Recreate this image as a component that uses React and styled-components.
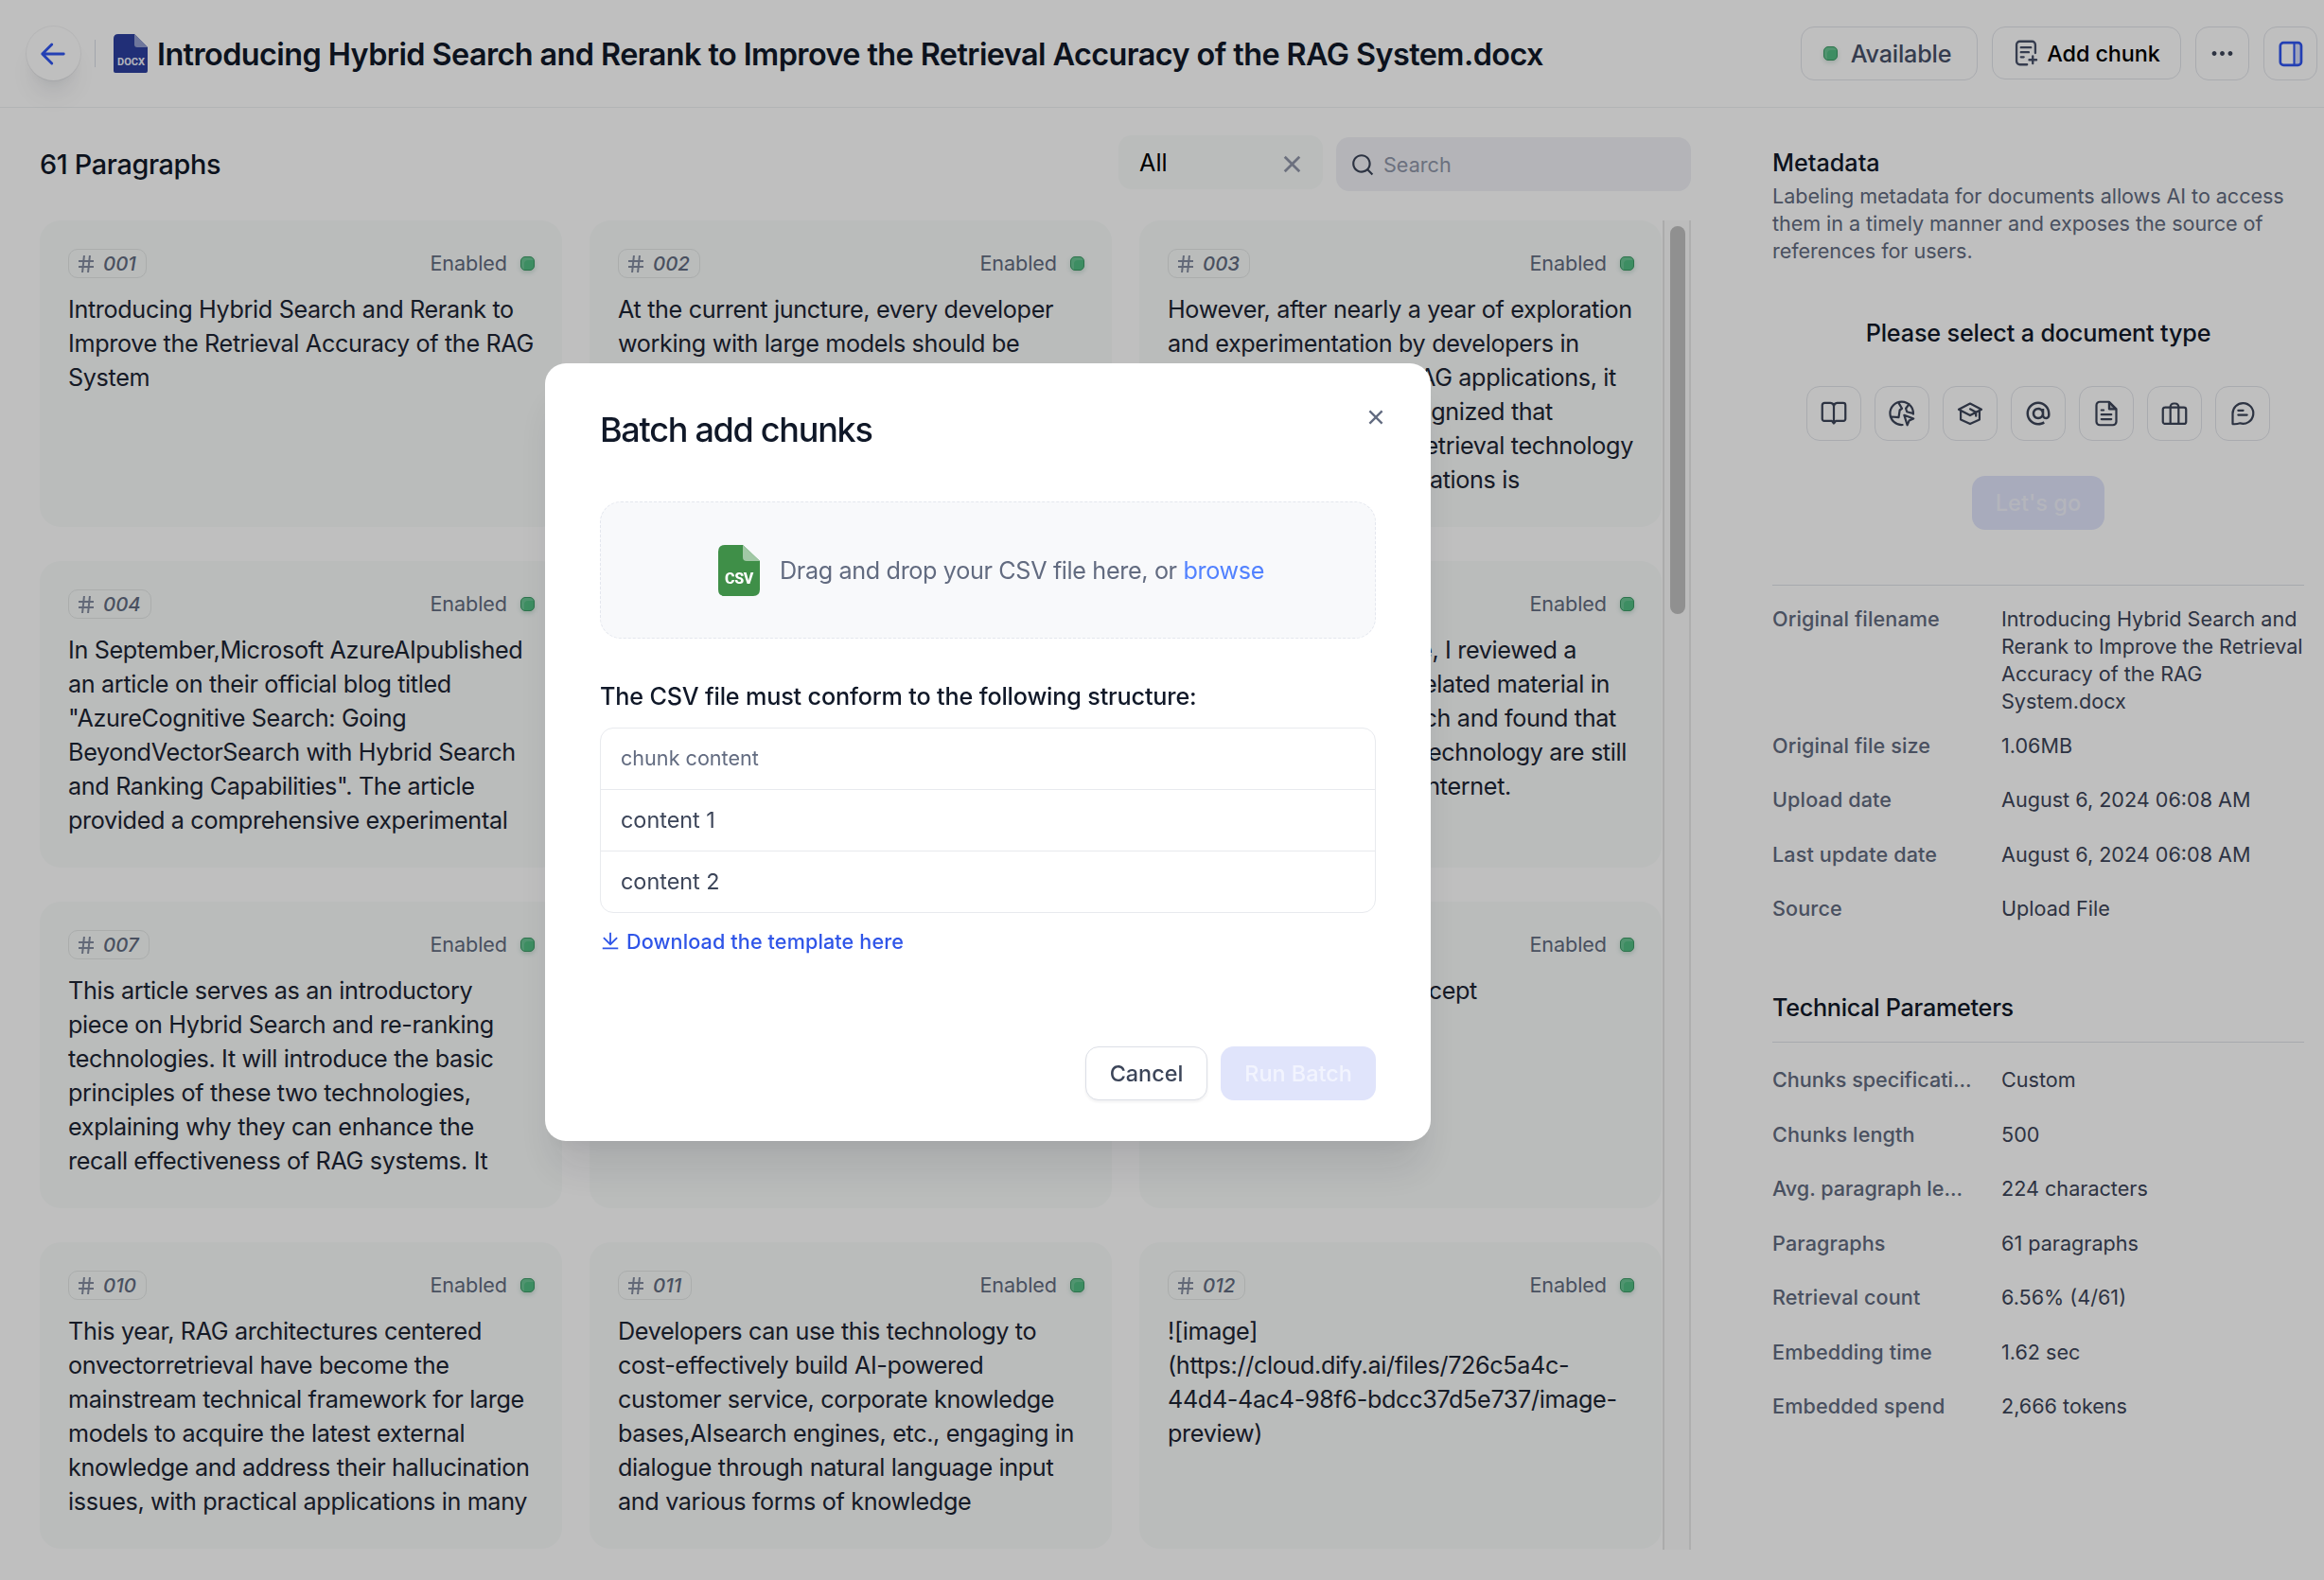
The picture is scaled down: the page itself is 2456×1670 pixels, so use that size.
import React from "react";
import styled, { createGlobalStyle } from "styled-components";
import { RiCloseLine, RiSearchLine, RiMoreFill, RiHashtag, RiAtLine, RiDownloadLine } from "react-icons/ri";

const Global = createGlobalStyle`
  *, *::before, *::after { box-sizing: border-box; }
  body { margin: 0; background: #fff; font-family: Inter, "Noto Sans", sans-serif; font-size: 25.2px; color: #101828; overflow: hidden; }
  button { font: inherit; margin: 0; background: none; border: none; padding: 0; color: inherit; }
  h1, h2, h3, p { margin: 0; }
  svg { display: block; flex-shrink: 0; }
`;

const Page = styled.div`
  width: 2456px;
  height: 1670px;
  display: flex;
  flex-direction: column;
  overflow: hidden;
`;

const Header = styled.header`
  height: 114px;
  flex-shrink: 0;
  display: flex;
  align-items: center;
  padding: 0 7px 0 28px;
  border-bottom: 1.5px solid #eef0f2;
`;

const BackButton = styled.button`
  width: 57px;
  height: 57px;
  padding-right: 1px;
  border-radius: 50%;
  display: flex;
  align-items: center;
  justify-content: center;
  color: #3156f0;
  background: #fff;
  box-shadow: 0 0 0 1px rgba(16, 24, 40, 0.05), 0 21px 27px -7px rgba(16, 24, 40, 0.09), 0 7px 11px -4px rgba(16, 24, 40, 0.04);
`;

const Divider = styled.div`
  width: 1px;
  height: 29px;
  margin: 0 19px 0 15px;
  background: #d9dce6;
`;

const Title = styled.h1`
  margin-left: 10px;
  padding-top: 2px;
  flex: 1;
  font-size: 32.4px;
  line-height: 48px;
  font-weight: 630;
  letter-spacing: -0.58px;
  white-space: nowrap;
`;

const HeaderActions = styled.div`
  display: flex;
  gap: 15px;
`;

const OutlineBox = styled.button`
  height: ${(p) => p.$h || 57}px;
  width: ${(p) => p.$w}px;
  padding-right: ${(p) => p.$pr || 0}px;
  display: flex;
  align-items: center;
  justify-content: center;
  gap: ${(p) => p.$gap || 0}px;
  border: 1px solid #e2e4ea;
  border-radius: 14px;
  font-size: ${(p) => p.$fs || 25.2}px;
  letter-spacing: ${(p) => p.$ls || 0}px;
  font-weight: 500;
  color: ${(p) => p.$color || "#3c4559"};
  white-space: nowrap;
  svg { color: ${(p) => p.$icon || "inherit"}; }
`;

const Dot = styled.span`
  width: 15px;
  height: 15px;
  border-radius: 5px;
  border: 1.5px solid #3d9a66;
  background: #52bd83;
  box-shadow: 0 2px 5px rgba(16, 100, 60, 0.2), inset 3px 3px 0 rgba(255, 255, 255, 0.15);
`;

const Body = styled.div`
  flex: 1;
  display: flex;
  min-height: 0;
`;

const Main = styled.main`
  width: 1787px;
  padding: 30px 0 0 42px;
  display: flex;
  flex-direction: column;
`;

const Toolbar = styled.div`
  display: flex;
  align-items: flex-start;
  height: 89px;
`;

const Count = styled.h2`
  flex: 1;
  font-size: 28.8px;
  font-weight: 520;
  line-height: 60px;
  letter-spacing: -0.35px;
`;

const Filter = styled.div`
  width: 216px;
  height: 57px;
  margin: -1px 14px 0 0;
  padding: 0 16px 0 22px;
  border-radius: 14px;
  background: #f8fbfa;
  display: flex;
  align-items: center;
  justify-content: space-between;
  color: #000;
  svg { color: #9096a9; margin-top: 3px; }
`;

const SearchBox = styled.div`
  width: 375px;
  height: 57px;
  margin-top: 1px;
  padding-left: 15px;
  border-radius: 14px;
  background: #f0f1f6;
  display: flex;
  align-items: center;
  gap: 9px;
  font-size: 21.6px;
  color: #8f96a9;
  svg { color: #3c4559; }
`;

const ListArea = styled.div`
  display: flex;
  height: 1405px;
`;

const CardGrid = styled.div`
  display: grid;
  width: 1714px;
  grid-template-columns: repeat(3, 552px);
  grid-auto-rows: 324px;
  column-gap: 29px;
  row-gap: 36px;
  align-content: start;
`;

const CardBox = styled.article`
  padding: 30px 29px 0 30px;
  border-radius: 22px;
  background: #f8fbfa;
`;

const CardTop = styled.div`
  height: 31px;
  display: flex;
  align-items: center;
  justify-content: space-between;
`;

const Tag = styled.div`
  height: 31px;
  display: flex;
  align-items: center;
  gap: 6px;
  padding: 0 10px 0 6px;
  border: 1px solid #e4e7e6;
  border-radius: 10px;
  font-size: 20.4px;
  font-weight: 540;
  font-style: italic;
  color: #626b80;
  svg { color: #858da1; }
`;

const Status = styled.div`
  display: flex;
  align-items: center;
  gap: 14px;
  font-size: 21.6px;
  line-height: 26px;
  padding-bottom: 1px;
  letter-spacing: -0.08px;
  color: #626b80;
`;

const CardText = styled.div`
  margin-top: 15px;
  line-height: 36px;
  letter-spacing: -0.35px;
  white-space: pre;
  color: #1d2433;
`;

const TailLine = styled.div`
  width: ${(p) => p.$end}px;
  text-align: right;
`;

const ScrollTrack = styled.div`
  width: 30px;
  margin-left: 1px;
  padding: 6px 0 0 6px;
  border-left: 2px solid #e5e5e5;
  border-right: 2px solid #e8e8e8;
  background: #fbfbfb;
`;

const ScrollThumb = styled.div`
  width: 16px;
  height: 410px;
  border-radius: 8px;
  background: #c0c0c0;
`;

const Side = styled.aside`
  flex: 1;
  padding: 42px 21px 0 86px;
`;

const SideTitle = styled.h3`
  font-size: 25.2px;
  line-height: 32px;
  font-weight: 500;
`;

const SideNote = styled.p`
  margin-top: 5px;
  font-size: 21.6px;
  line-height: 29px;
  letter-spacing: -0.06px;
  color: #626b80;
  white-space: pre;
`;

const Prompt = styled(SideTitle)`
  margin-top: 56px;
  text-align: center;
  letter-spacing: -0.16px;
`;

const TechTitle = styled(SideTitle)`
  margin-top: 74px;
  letter-spacing: -0.28px;
`;

const TypeRow = styled.div`
  display: flex;
  justify-content: center;
  gap: 14px;
  margin-top: 40px;
`;

const GoButton = styled.button`
  display: block;
  width: 140px;
  height: 57px;
  margin: 37px auto 0;
  border-radius: 14px;
  background: #e0e4fb;
  color: #f0f2fb;
  font-size: 23.6px;
  font-weight: 500;
`;

const InfoList = styled.dl`
  margin: ${(p) => p.$mt}px 0 0;
  padding-top: ${(p) => p.$top}px;
  border-top: 1px solid #dfe2e9;
  font-size: 21.6px;
  line-height: 29px;
`;

const InfoRow = styled.div`
  display: flex;
  margin-bottom: ${(p) => (p.$tall ? 17.5 : 28.5)}px;
`;

const Term = styled.dt`
  width: 242px;
  flex-shrink: 0;
  font-weight: 500;
  letter-spacing: ${(p) => (p.$cut ? -0.02 : 0.12)}px;
  color: #626b80;
  white-space: nowrap;
`;

const Value = styled.dd`
  margin: 0;
  color: #3c4559;
  white-space: pre;
`;

const Overlay = styled.div`
  position: fixed;
  inset: 0;
  display: flex;
  align-items: flex-start;
  padding: 384px 0 0 576px;
  background: rgba(0, 0, 0, 0.25);
`;

const Modal = styled.section`
  width: 936px;
  height: 822px;
  border-radius: 22px;
  background: #fff;
  padding: 40px 58px 0;
  display: flex;
  flex-direction: column;
  box-shadow: 0 36px 43px -7px rgba(16, 24, 40, 0.1), 0 14px 14px -7px rgba(16, 24, 40, 0.04);
`;

const ModalHead = styled.div`
  display: flex;
  justify-content: space-between;
  height: 106px;
  svg { margin: 3px -14px 0 0; color: #626b80; }
`;

const ModalTitle = styled.h2`
  font-size: 36px;
  line-height: 60px;
  font-weight: 550;
  letter-spacing: -1.27px;
`;

const DropZone = styled.div`
  height: 145px;
  flex-shrink: 0;
  display: flex;
  align-items: center;
  justify-content: center;
  gap: 21px;
  padding-left: 7px;
  border: 1.5px dashed #e4e7ee;
  border-radius: 22px;
  background: #f8f9fb;
  letter-spacing: -0.36px;
  color: #626b80;
`;

const Browse = styled.span`
  color: #5282ff;
`;

const StructureTitle = styled.h3`
  margin-top: 43px;
  font-size: 25.2px;
  line-height: 36px;
  font-weight: 520;
  letter-spacing: -0.17px;
`;

const Table = styled.div`
  margin-top: 15px;
  height: 196px;
  flex-shrink: 0;
  border: 1.5px solid #e8eaee;
  border-radius: 14px;
`;

const TableRow = styled.div`
  height: 65px;
  padding: 0 0 2px 21px;
  display: flex;
  align-items: center;
  border-bottom: ${(p) => (p.$last ? "none" : "1.5px solid #e8eaee")};
  font-size: ${(p) => (p.$head ? 21.6 : 23.4)}px;
  color: ${(p) => (p.$head ? "#626b80" : "#3c4559")};
`;

const Download = styled.div`
  display: flex;
  align-items: center;
  gap: 6px;
  margin-top: 14px;
  height: 32px;
  font-size: 21.6px;
  font-weight: 500;
  letter-spacing: 0.12px;
  color: #2f55e8;
`;

const ModalActions = styled.div`
  display: flex;
  justify-content: flex-end;
  gap: 14px;
  margin-top: 95px;
`;

const ModalButton = styled.button`
  width: ${(p) => (p.$primary ? 164 : 129)}px;
  height: 57px;
  border-radius: 14px;
  font-size: 23.4px;
  font-weight: 500;
  border: ${(p) => (p.$primary ? "none" : "1.5px solid #dcdfe6")};
  background: ${(p) => (p.$primary ? "#e0e4fb" : "#fff")};
  color: ${(p) => (p.$primary ? "#f2f4fe" : "#3c4559")};
  box-shadow: ${(p) => (p.$primary ? "none" : "0 2px 3px rgba(16, 24, 40, 0.06)")};
`;

const DocxIcon = () => (
  <svg width="36" height="41" viewBox="0 0 36 41">
    <path d="M5 0H22L36 14V39Q36 41 34 41H2Q0 41 0 39V5Q0 0 5 0Z" fill="#2c3f9f" />
    <path d="M22 0L36 14H25Q22 14 22 11Z" fill="#959fd0" />
    <text x="4" y="33" textLength="29" lengthAdjust="spacingAndGlyphs" fontFamily="Roboto, sans-serif" fontWeight="700" fontSize="11.5" fill="#eef0fa">DOCX</text>
  </svg>
);

const CsvIcon = () => (
  <svg width="44" height="54" viewBox="0 0 44 54">
    <path d="M7 0H26L44 17V47Q44 54 37 54H7Q0 54 0 47V7Q0 0 7 0Z" fill="#3f8f48" />
    <path d="M26 0L44 17H30Q26 17 26 13Z" fill="#a1c8a5" />
    <text x="7" y="41" textLength="30" lengthAdjust="spacingAndGlyphs" fontFamily="Roboto, sans-serif" fontWeight="800" fontSize="16.5" fill="#fff">CSV</text>
  </svg>
);

const Stroke = ({ size = 28, children, width = 1.9 }) => (
  <svg width={size} height={size} viewBox="0 0 24 24" fill="none" stroke="currentColor" strokeWidth={width} strokeLinecap="round" strokeLinejoin="round">{children}</svg>
);

const ArrowLeft = () => (
  <Stroke size={30} width={2.3}>
    <path d="M21 12H3M11 4L3 12l8 8" />
  </Stroke>
);

const AddDoc = () => (
  <Stroke size={28} width={2}>
    <path d="M20.500 12V4.500a3 3 0 0 0-3-3H6.500a3 3 0 0 0-3 3v15a3 3 0 0 0 3 3H13M7.500 7h9M7.500 11.300h7M7.500 15.700h2.500M18.200 15v6.500M15 18.200h6.500" />
  </Stroke>
);

const PanelRight = () => (
  <Stroke size={28} width={2.3}>
    <rect x="15" y="2" width="6.500" height="20" fill="#d6dcfa" stroke="none" />
    <rect x="2.400" y="1.800" width="19" height="20.400" rx="3" />
    <path d="M15 2v20" strokeWidth="1.800" />
  </Stroke>
);

const BookOpen = () => (
  <Stroke>
    <path d="M12 5.500v15.500M12 5.500a3.200 3.200 0 0 0-3-3H3.500a2 2 0 0 0-2 2V17a1.700 1.700 0 0 0 1.700 1.700h7L12 21l1.800-2.300h7a1.700 1.700 0 0 0 1.700-1.700V4.500a2 2 0 0 0-2-2H15a3.200 3.200 0 0 0-3 3z" />
  </Stroke>
);

const GlobeCursor = () => (
  <Stroke>
    <path d="M22.200 12.500A10.500 10.500 0 1 0 12.500 22.300M2.500 15l6.500.500 1-6.500 2-1.500L9 2.500M22 12l-5.500-1.500-1-3 3-4M14 13.500l8.500 3.200-4 1.800-1.700 4z" />
  </Stroke>
);

const GradCap = () => (
  <Stroke>
    <path d="M1.700 8.300L12 3l10.300 5.300L12 13.800zM3.500 10v7.500L12 21.500l8.500-4V10M12 8l5.300 3v3.300" />
  </Stroke>
);

const FileText = () => (
  <Stroke>
    <path d="M14.500 1.500H6a3 3 0 0 0-3 3v15a3 3 0 0 0 3 3h12a3 3 0 0 0 3-3V8z" />
    <path d="M14.500 2v6h6z" fill="currentColor" fillOpacity=".35" />
    <path d="M7.500 9h2M7.500 13h9M7.500 17.200h9" />
  </Stroke>
);

const Suitcase = () => (
  <Stroke>
    <rect x="1.500" y="6.600" width="21" height="14.800" rx="2" />
    <path d="M8.300 21.400V6a3 3 0 0 1 3-3h1.400a3 3 0 0 1 3 3v15.400" />
  </Stroke>
);

const ChatBubble = () => (
  <Stroke>
    <path d="M12.500 2.600a9.300 9.300 0 1 1-2.800 18.200Q6 22 3 21.500V12A9.400 9.400 0 0 1 12.500 2.600zM8 9.300h4.500M8 13.300h8" />
  </Stroke>
);

const docTypes = [BookOpen, GlobeCursor, GradCap, () => <RiAtLine size={30} />, FileText, Suitcase, ChatBubble];

const chunks = [
  { id: "001", text: "Introducing Hybrid Search and Rerank to\nImprove the Retrieval Accuracy of the RAG\nSystem" },
  { id: "002", text: "At the current juncture, every developer\nworking with large models should be" },
  {
    id: "003",
    text: "However, after nearly a year of exploration\nand experimentation by developers in",
    tail: [["RAG applications, it", 474], ["recognized that", 407], ["retrieval technology", 492], ["applications is", 372]],
  },
  { id: "004", text: "In September,Microsoft AzureAIpublished\nan article on their official blog titled\n\"AzureCognitive Search: Going\nBeyondVectorSearch with Hybrid Search\nand Ranking Capabilities\". The article\nprovided a comprehensive experimental" },
  { id: "005" },
  {
    id: "006",
    tail: [["time, I reviewed a", 432], ["related material in", 467], ["Search and found that", 474], ["technology are still", 485], ["Internet.", 363]],
  },
  { id: "007", text: "This article serves as an introductory\npiece on Hybrid Search and re-ranking\ntechnologies. It will introduce the basic\nprinciples of these two technologies,\nexplaining why they can enhance the\nrecall effectiveness of RAG systems. It" },
  { id: "008" },
  { id: "009", tail: [["concept", 327]] },
  { id: "010", text: "This year, RAG architectures centered\nonvectorretrieval have become the\nmainstream technical framework for large\nmodels to acquire the latest external\nknowledge and address their hallucination\nissues, with practical applications in many" },
  { id: "011", text: "Developers can use this technology to\ncost-effectively build AI-powered\ncustomer service, corporate knowledge\nbases,AIsearch engines, etc., engaging in\ndialogue through natural language input\nand various forms of knowledge" },
  { id: "012", text: "![image]\n(https://cloud.dify.ai/files/726c5a4c-\n44d4-4ac4-98f6-bdcc37d5e737/image-\npreview)" },
];

const Card = ({ id, text, tail = [] }) => (
  <CardBox>
    <CardTop>
      <Tag><RiHashtag size={24} />{id}</Tag>
      <Status>Enabled<Dot /></Status>
    </CardTop>
    <CardText>
      {text}
      {tail.map(([line, end]) => <TailLine key={line} $end={end}>{line}</TailLine>)}
    </CardText>
  </CardBox>
);

const fileInfo = [
  ["Original filename", "Introducing Hybrid Search and\nRerank to Improve the Retrieval\nAccuracy of the RAG\nSystem.docx"],
  ["Original file size", "1.06MB"],
  ["Upload date", "August 6, 2024 06:08 AM"],
  ["Last update date", "August 6, 2024 06:08 AM"],
  ["Source", "Upload File"],
];

const techInfo = [
  ["Chunks specificati...", "Custom"],
  ["Chunks length", "500"],
  ["Avg. paragraph le...", "224 characters"],
  ["Paragraphs", "61 paragraphs"],
  ["Retrieval count", "6.56% (4/61)"],
  ["Embedding time", "1.62 sec"],
  ["Embedded spend", "2,666 tokens"],
];

const Info = ({ items, mt, top }) => (
  <InfoList $mt={mt} $top={top}>
    {items.map(([term, value]) => (
      <InfoRow key={term} $tall={value.includes("\n")}>
        <Term $cut={term.endsWith("...")}>{term}</Term>
        <Value>{value}</Value>
      </InfoRow>
    ))}
  </InfoList>
);

export default function App() {
  return (
    <>
      <Global />
      <Page>
        <Header>
          <BackButton><ArrowLeft /></BackButton>
          <Divider />
          <DocxIcon />
          <Title>Introducing Hybrid Search and Rerank to Improve the Retrieval Accuracy of the RAG System.docx</Title>
          <HeaderActions>
            <OutlineBox $w={187} $gap={14} $pr={4} $ls={-0.2} $color="#475069"><Dot />Available</OutlineBox>
            <OutlineBox $w={200} $h={56} $gap={8} $fs={23.4} $ls={-0.1} $color="#000" $icon="#475069"><AddDoc />Add chunk</OutlineBox>
            <OutlineBox $w={57}><RiMoreFill size={29} /></OutlineBox>
            <OutlineBox $w={57} $color="#2f55f0"><PanelRight /></OutlineBox>
          </HeaderActions>
        </Header>
        <Body>
          <Main>
            <Toolbar>
              <Count>61 Paragraphs</Count>
              <Filter>All<RiCloseLine size={33} /></Filter>
              <SearchBox><RiSearchLine size={26} />Search</SearchBox>
            </Toolbar>
            <ListArea>
              <CardGrid>
                {chunks.map((c) => <Card key={c.id} {...c} />)}
              </CardGrid>
              <ScrollTrack><ScrollThumb /></ScrollTrack>
            </ListArea>
          </Main>
          <Side>
            <SideTitle>Metadata</SideTitle>
            <SideNote>{"Labeling metadata for documents allows AI to access\nthem in a timely manner and exposes the source of\nreferences for users."}</SideNote>
            <Prompt>Please select a document type</Prompt>
            <TypeRow>
              {docTypes.map((Icon, i) => <OutlineBox key={i} $w={58} $h={58}><Icon /></OutlineBox>)}
            </TypeRow>
            <GoButton>Let's go</GoButton>
            <Info items={fileInfo} mt={58} top={21} />
            <TechTitle>Technical Parameters</TechTitle>
            <Info items={techInfo} mt={20} top={25} />
          </Side>
        </Body>
      </Page>
      <Overlay>
        <Modal>
          <ModalHead>
            <ModalTitle>Batch add chunks</ModalTitle>
            <RiCloseLine size={28} />
          </ModalHead>
          <DropZone>
            <CsvIcon />
            <span>Drag and drop your CSV file here, or <Browse>browse</Browse></span>
          </DropZone>
          <StructureTitle>The CSV file must conform to the following structure:</StructureTitle>
          <Table>
            <TableRow $head>chunk content</TableRow>
            <TableRow>content 1</TableRow>
            <TableRow $last>content 2</TableRow>
          </Table>
          <Download><RiDownloadLine size={22} />Download the template here</Download>
          <ModalActions>
            <ModalButton>Cancel</ModalButton>
            <ModalButton $primary>Run Batch</ModalButton>
          </ModalActions>
        </Modal>
      </Overlay>
    </>
  );
}
